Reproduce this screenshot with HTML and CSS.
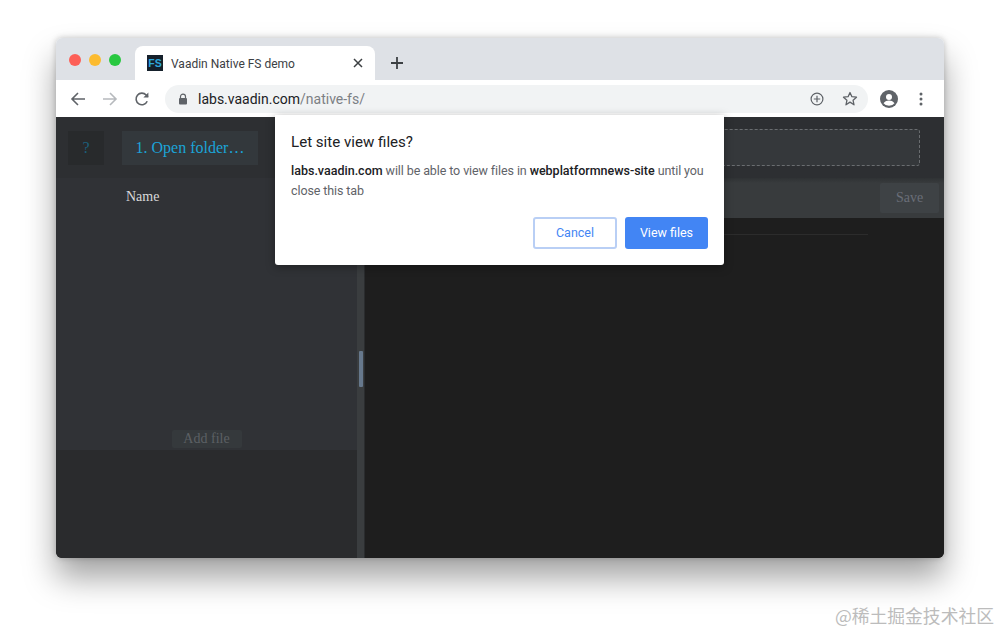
FILE: index.html
```html
<!DOCTYPE html>
<html lang="en">
<head>
<meta charset="utf-8">
<title>Vaadin Native FS demo</title>
<link rel="stylesheet" href="styles.css">
</head>
<body>
<div class="window">
  <div class="tabstrip">
    <div class="lights"><span class="light red"></span><span class="light yellow"></span><span class="light green"></span></div>
    <div class="tab">
      <span class="favicon">FS</span>
      <span class="tab-title">Vaadin Native FS demo</span>
      <svg class="tab-close" width="10" height="10" viewBox="0 0 10 10"><path d="M1 1l8 8M9 1l-8 8" stroke="#3c4043" stroke-width="1.5" fill="none"/></svg>
    </div>
    <svg class="new-tab" width="14" height="14" viewBox="0 0 14 14"><path d="M7 1v12M1 7h12" stroke="#3c4043" stroke-width="1.8" fill="none"/></svg>
  </div>
  <div class="toolbar">
    <svg class="nav" width="16" height="16" viewBox="0 0 16 16"><path d="M15 8H2M8 2L2 8l6 6" stroke="#5f6368" stroke-width="1.6" fill="none"/></svg>
    <svg class="nav" width="16" height="16" viewBox="0 0 16 16"><path d="M1 8h13M8 2l6 6-6 6" stroke="#b6b9bd" stroke-width="1.6" fill="none"/></svg>
    <svg class="nav" width="16" height="16" viewBox="0 0 16 16"><path d="M13.2 10.2A5.8 5.8 0 1 1 12.2 4L14 5.8" stroke="#5f6368" stroke-width="1.6" fill="none"/><path d="M14.4 1.6v5h-5z" fill="#5f6368"/></svg>
    <div class="omnibox">
      <svg class="lock" width="10" height="12" viewBox="0 0 10 12"><path d="M2.5 5V3.6a2.5 2.5 0 0 1 5 0V5" stroke="#5f6368" stroke-width="1.2" fill="none"/><rect x="1" y="5" width="8" height="6.5" rx="1" fill="#5f6368"/></svg>
      <span class="url"><span class="host">labs.vaadin.com</span>/native-fs/</span>
      <svg class="omni-icon" width="14" height="14" viewBox="0 0 14 14"><circle cx="7" cy="7" r="5.9" stroke="#5f6368" stroke-width="1.2" fill="none"/><path d="M7 3.8v6.4M3.8 7h6.4" stroke="#5f6368" stroke-width="1.2"/></svg>
      <svg class="omni-icon" width="16" height="15" viewBox="0 0 16 15"><path d="M8 1.5l1.9 4.2 4.6.5-3.4 3.1.9 4.5L8 11.1l-4 2.7.9-4.5L1.500 6.200l4.600-.5z" stroke="#5f6368" stroke-width="1.3" fill="none" stroke-linejoin="round"/></svg>
    </div>
    <svg class="avatar" width="18" height="18" viewBox="0 0 18 18"><circle cx="9" cy="9" r="9" fill="#5f6368"/><circle cx="9" cy="7" r="3" fill="#fff"/><path d="M3.500 13.200c1.500-2 3.500-2.700 5.500-2.700s4 .7 5.500 2.700a7 7 0 0 1-11 0z" fill="#fff"/></svg>
    <svg class="menu" width="4" height="14" viewBox="0 0 4 14"><circle cx="2" cy="2" r="1.500" fill="#5f6368"/><circle cx="2" cy="7" r="1.500" fill="#5f6368"/><circle cx="2" cy="12" r="1.500" fill="#5f6368"/></svg>
  </div>
  <div class="content">
    <div class="topbar">
      <span class="help">?</span>
      <span class="open">1. Open folder…</span>
      <div class="dropzone"></div>
    </div>
    <div class="panes">
      <div class="sidebar">
        <div class="files">
          <div class="name">Name</div>
          <div class="add"><span class="add-btn">Add file</span></div>
        </div>
        <div class="side-bottom"></div>
      </div>
      <div class="splitter"><span class="thumb"></span></div>
      <div class="editor">
        <div class="savebar"><span class="save">Save</span></div>
        <div class="code"><div class="code-line"></div></div>
      </div>
    </div>
  </div>
</div>
<div class="dialog">
  <h1 class="dialog-title">Let site view files?</h1>
  <p class="dialog-text"><b>labs.vaadin.com</b> will be able to view files in <b>webplatformnews-site</b> until you close this tab</p>
  <div class="dialog-actions">
    <span class="btn cancel">Cancel</span>
    <span class="btn primary">View files</span>
  </div>
</div>
<div class="watermark">@稀土掘金技术社区</div>
</body>
</html>
```
FILE: styles.css
```css
* { box-sizing: border-box; }
html, body { margin: 0; height: 633px; overflow: hidden; }
body { background: #fff; padding: 38px 56px 0; font-family: Roboto, "Liberation Sans", sans-serif; }

.window {
  width: 888px; height: 520px; border-radius: 6px; overflow: hidden;
  display: flex; flex-direction: column;
  box-shadow: 0 20px 32px rgba(0,0,0,.36), 0 0 6px rgba(0,0,0,.22);
}

.tabstrip { height: 42px; background: #dee1e6; display: flex; align-items: flex-end; flex: none; }
.lights { display: flex; gap: 8px; padding: 0 0 14px 13px; width: 79px; flex: none; align-self: flex-end; }
.light { width: 12px; height: 12px; border-radius: 50%; }
.red { background: #fd5f57; }
.yellow { background: #fcbb2f; }
.green { background: #28c840; }
.tab {
  width: 240px; height: 34px; background: #fff; border-radius: 8px 8px 0 0;
  display: flex; align-items: center; padding: 0 12px 0 12px; flex: none;
}
.favicon {
  width: 16px; height: 16px; background: #15202b; color: #2ea6dc;
  font: 700 10.500px/16px "Liberation Sans", sans-serif; text-align: center; flex: none;
}
.tab-title { margin-left: 8px; padding-top: 1px; font-size: 12px; color: #3c4043; flex: 1; white-space: nowrap; }
.tab-close { flex: none; }
.new-tab { margin: 0 0 10px 15px; flex: none; }

.toolbar { height: 37px; background: #fff; display: flex; align-items: center; padding-left: 14px; flex: none; }
.nav { margin-right: 16px; flex: none; }
.omnibox {
  width: 703px; height: 28px; margin-left: -1px; background: #f1f3f4; border-radius: 14px;
  display: flex; align-items: center; padding: 0 10px 0 13px; flex: none;
}
.lock { flex: none; }
.url { margin-left: 10px; font-size: 14px; color: #7c8084; flex: 1; white-space: nowrap; }
.host { color: #202124; }
.omni-icon { margin-left: 18px; flex: none; }
.avatar { margin-left: 12px; flex: none; }
.menu { margin-left: 21px; flex: none; }

.content {
  flex: 1; min-height: 0; display: flex; flex-direction: column; background: #1e1e1e;
  font-family: "Liberation Serif", serif;
}
.topbar { height: 61px; background: #2d2f32; display: flex; align-items: center; padding: 0 24px 0 12px; flex: none; }
.help {
  width: 36px; height: 34px; background: #282a2c; color: #1c5f7a; font-size: 16px;
  display: flex; align-items: center; justify-content: center; flex: none;
}
.open {
  margin-left: 18px; width: 136px; height: 34px; background: #33383c; color: #1ba4d8; font-size: 16px;
  display: flex; align-items: center; justify-content: center; flex: none; white-space: nowrap;
}
.dropzone { margin-left: 24px; flex: 1; height: 37px; border: 1px dashed #6a6d70; border-radius: 3px; background: #35383b; }

.panes { flex: 1; min-height: 0; display: flex; }
.sidebar { width: 301px; display: flex; flex-direction: column; flex: none; }
.files { height: 272px; background: #303236; display: flex; flex-direction: column; flex: none; }
.name { padding: 10px 0 0 70px; color: #d9dadb; font-size: 14px; line-height: 18px; }
.add { margin-top: auto; display: flex; justify-content: center; padding-bottom: 2px; }
.add-btn {
  width: 70px; height: 18px; background: #35393c; color: #5c6064; font-size: 14px; line-height: 18px;
  text-align: center; border-radius: 2px;
}
.side-bottom { flex: 1; background: #2a2b2d; }
.splitter { width: 8px; background: #3a3d3f; border-right: 1px solid #2a2c2e; padding: 173px 0 0 2px; flex: none; }
.thumb { display: block; width: 4px; height: 36px; background: #66788c; border-radius: 1px; }
.editor { flex: 1; min-width: 0; display: flex; flex-direction: column; }
.savebar {
  height: 40px; background: linear-gradient(#2f3234, #383b3d 5px); display: flex; justify-content: flex-end; align-items: flex-start;
  padding: 5px 5px 0 0; flex: none;
}
.save {
  width: 59px; height: 30px; background: #3e4245; color: #6a6e78; font-size: 14px;
  display: flex; align-items: center; justify-content: center; border-radius: 2px;
}
.code { flex: 1; background: #1e1e1e; padding: 16px 76px 0 0; }
.code-line { height: 1px; background: #2c2c2c; }

.dialog {
  position: absolute; left: 275px; top: 115px; width: 449px; height: 150px; background: #fff;
  border-radius: 0 0 3px 3px; padding: 18px 16px 0;
  box-shadow: 0 2px 10px rgba(0,0,0,.35);
  font-family: Roboto, "Liberation Sans", sans-serif;
  display: flex; flex-direction: column;
}
.dialog-title { margin: 0; font-size: 15.100px; line-height: 18px; font-weight: 400; color: #202124; }
.dialog-text { margin: 10px 0 0; font-size: 12.500px; line-height: 20px; color: #5f6368; letter-spacing: -.1px; }
.dialog-text b { color: #202124; font-weight: 500; letter-spacing: 0; }
.dialog-actions { margin-top: 16px; display: flex; justify-content: flex-end; gap: 8px; }
.btn {
  height: 32px; padding-bottom: 1px; border-radius: 3px; font-size: 12.500px; display: flex; align-items: center; justify-content: center;
}
.cancel { width: 84px; color: #4285f4; background: #fff; border: 2px solid #b9cff5; }
.primary { width: 83px; color: #fff; background: #4285f4; }

.watermark {
  position: absolute; right: 6px; top: 604px; font: 17.800px/22px "Noto Sans CJK SC", sans-serif; color: #bcbcbc;
  white-space: nowrap;
}
```
